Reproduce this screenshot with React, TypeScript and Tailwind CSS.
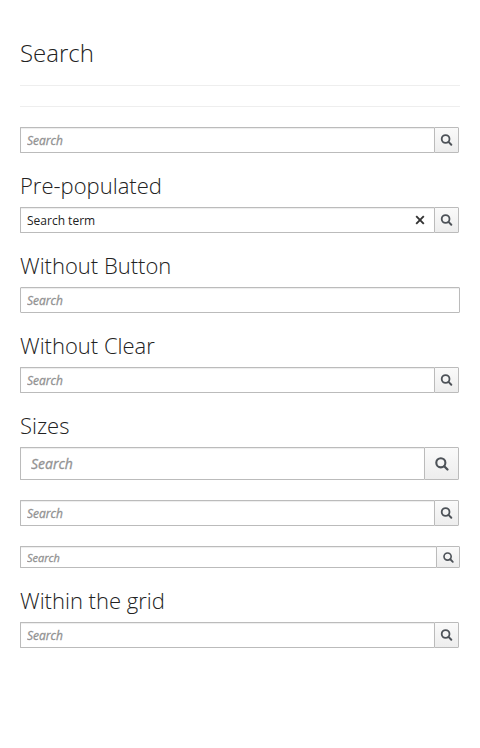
type Size = 'sm' | 'md' | 'lg';

const fields: Record<Size, string> = {
  sm: 'h-[22px] pl-1.5 pt-0.5 text-[11px]',
  md: 'h-[26px] pl-1.5 pt-0.5 text-[12px]',
  lg: 'h-[33px] pl-2.5 text-[14px]',
};
const rows: Record<Size, string> = { sm: 'w-[440px]', md: 'w-[439px]', lg: 'w-[439px]' };
const buttons: Record<Size, string> = { sm: 'w-[24px]', md: 'w-[25px]', lg: 'w-[35px]' };
const icons: Record<Size, string> = { sm: 'size-[11px]', md: 'size-[12px]', lg: 'size-[14px]' };

function SearchIcon({ size }: { size: Size }) {
  return (
    <svg viewBox={size === 'md' ? '0.4 0 12 12' : '0 0 12 12'} className={icons[size]} fill="none" stroke="#4d5258" overflow="visible">
      <circle cx="5" cy="5" r="3.9" strokeWidth="1.8" />
      <path d="M7.9 7.9 L10.7 10.7" strokeWidth="2" strokeLinecap="round" />
    </svg>
  );
}

function SearchBox({ size = 'md', value, button = true }: { size?: Size; value?: string; button?: boolean }) {
  return (
    <form className={`flex ${button ? rows[size] : 'w-[440px]'}`}>
      <div className={`flex min-w-0 flex-1 items-center border border-[#bbb] bg-white shadow-[inset_0_1px_1px_rgba(3,3,3,0.075)] ${button ? 'rounded-l-[1px] border-r-0' : 'rounded-[1px]'} ${fields[size]}`}>
        <input
          type="text"
          placeholder="Search"
          defaultValue={value}
          className="h-5 min-w-0 flex-1 bg-transparent leading-[20px] text-[#222] outline-none placeholder:italic placeholder:text-[#929292] placeholder:opacity-100 placeholder:[-webkit-text-stroke:0.3px_#929292]"
        />
        {value && (
          <button type="button" aria-label="Clear" className="mr-[9px] mb-0.5">
            <svg viewBox="0 0 10 10" className="size-[10px]" stroke="#333" strokeWidth="1.9">
              <path d="M1.2 1.2 L8.8 8.8 M8.8 1.2 L1.2 8.8" />
            </svg>
          </button>
        )}
      </div>
      {button && (
        <button
          type="button"
          aria-label="Search"
          className={`flex items-center justify-center rounded-r-[1px] border border-[#bbb] bg-linear-to-b from-[#fafafa] to-[#ededed] ${buttons[size]}`}
        >
          <SearchIcon size={size} />
        </button>
      )}
    </form>
  );
}

function Heading({ children }: { children: string }) {
  return <h2 className="mt-5 mb-2.5 h-6 text-[22px] leading-6 font-light">{children}</h2>;
}

export default function App() {
  return (
    <main className="min-h-[748px] bg-white px-5 pt-10 font-['Open_Sans',sans-serif] text-[12px] text-[#222]">
      <h1 className="h-[26px] text-[24px] leading-[26px] font-light">Search</h1>
      <hr className="mt-[19px] border-[#eee]" />
      <hr className="mt-5 mb-5 border-[#eee]" />
      <SearchBox />
      <Heading>Pre-populated</Heading>
      <SearchBox value="Search term" />
      <Heading>Without Button</Heading>
      <SearchBox button={false} />
      <Heading>Without Clear</Heading>
      <SearchBox />
      <Heading>Sizes</Heading>
      <div className="flex flex-col gap-5">
        <SearchBox size="lg" />
        <SearchBox />
        <SearchBox size="sm" />
      </div>
      <Heading>Within the grid</Heading>
      <SearchBox />
    </main>
  );
}
